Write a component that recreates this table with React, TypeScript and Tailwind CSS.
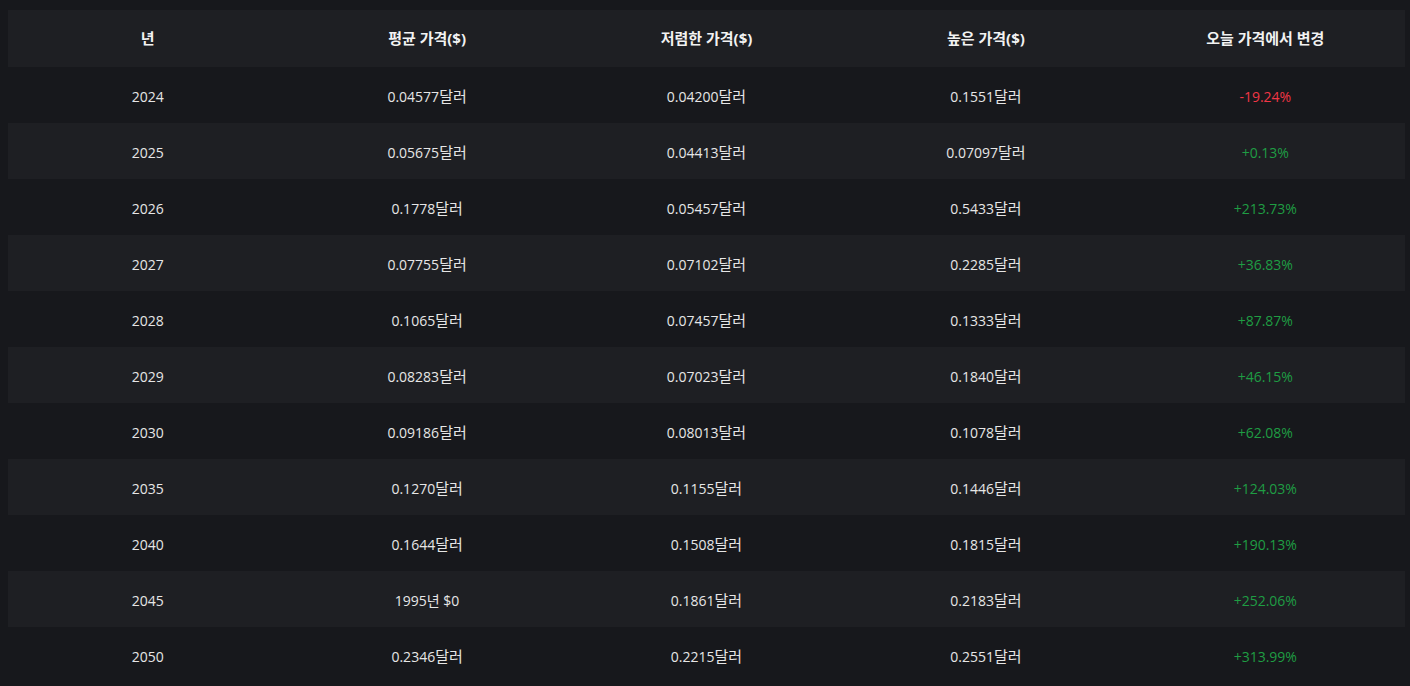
import React from "react";

const rows = [
  ["2024", "0.04577달러", "0.04200달러", "0.1551달러", "-19.24%"],
  ["2025", "0.05675달러", "0.04413달러", "0.07097달러", "+0.13%"],
  ["2026", "0.1778달러", "0.05457달러", "0.5433달러", "+213.73%"],
  ["2027", "0.07755달러", "0.07102달러", "0.2285달러", "+36.83%"],
  ["2028", "0.1065달러", "0.07457달러", "0.1333달러", "+87.87%"],
  ["2029", "0.08283달러", "0.07023달러", "0.1840달러", "+46.15%"],
  ["2030", "0.09186달러", "0.08013달러", "0.1078달러", "+62.08%"],
  ["2035", "0.1270달러", "0.1155달러", "0.1446달러", "+124.03%"],
  ["2040", "0.1644달러", "0.1508달러", "0.1815달러", "+190.13%"],
  ["2045", "1995년 $0", "0.1861달러", "0.2183달러", "+252.06%"],
  ["2050", "0.2346달러", "0.2215달러", "0.2551달러", "+313.99%"],
];

const headers = ["년", "평균 가격($)", "저렴한 가격($)", "높은 가격($)", "오늘 가격에서 변경"];

// korean suffix renders a bit wider in the original
const Cell = ({ text }: { text: string }) => {
  if (text.endsWith("달러")) {
    return (
      <>
        {text.slice(0, -2)}
        <span className="text-[15px]">달러</span>
      </>
    );
  }
  return <>{text}</>;
};

const App = () => {
  return (
    <div
      className="min-h-screen bg-[#17181c] pt-[10px] pl-2 pr-[5px]"
      style={{ fontFamily: '"Open Sans", "Noto Sans CJK KR", sans-serif' }}
    >
      <div className="grid grid-cols-5 bg-[#1e1f23] h-[57px] items-center text-center text-[15px] font-bold text-[#f2f2f2]">
        {headers.map((h) => (
          <div key={h}>{h}</div>
        ))}
      </div>
      {rows.map((row, idx) => (
        <div
          key={row[0]}
          className={
            "grid grid-cols-5 h-[56px] items-center text-center text-[14px] text-[#e6e6e6] pt-[2px] " +
            (idx % 2 === 1 ? "bg-[#1e1f23]" : "bg-[#17181c]")
          }
        >
          {row.map((cell, i) => (
            <div
              key={i}
              className={
                i === 4
                  ? cell.startsWith("-")
                    ? "text-[#f23645]"
                    : "text-[#1f9d43]"
                  : ""
              }
            >
              <Cell text={cell} />
            </div>
          ))}
        </div>
      ))}
    </div>
  );
};

export default App;
